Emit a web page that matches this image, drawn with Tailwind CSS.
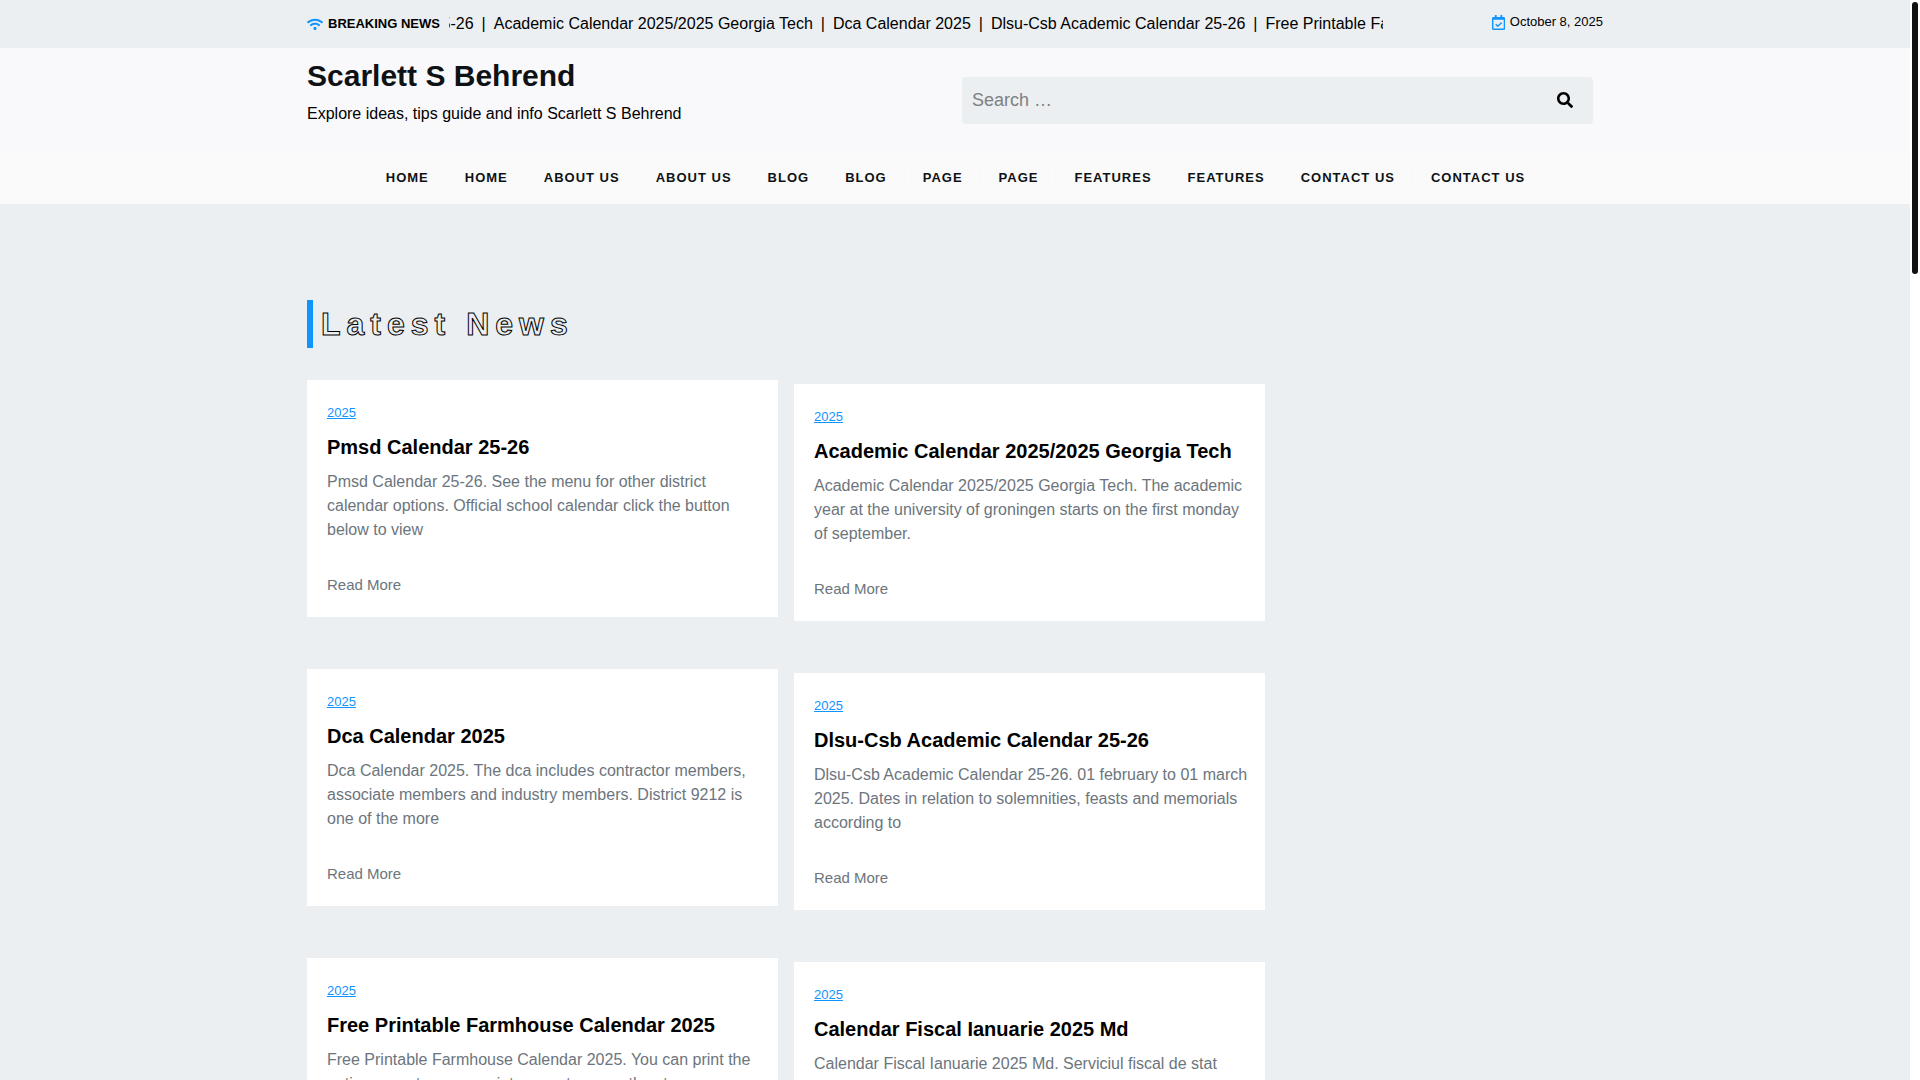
<!DOCTYPE html>
<html lang="en">
<head>
    <meta charset="UTF-8">
    <meta name="viewport" content="width=device-width, initial-scale=1.0">
    <title>Scarlett S Behrend</title>
    <script src="https://cdn.jsdelivr.net/npm/@tailwindcss/browser@4"></script>
</head>
<body class="h-screen overflow-hidden bg-white pr-[10px] font-['Liberation_Sans',Arial,sans-serif] text-base text-black">

  <div class="min-h-full bg-[#ebeff2]">

    <!-- Top bar -->
    <div class="mx-auto flex h-12 max-w-[1320px] items-center px-3">
      <div class="flex shrink-0 items-center gap-[5px] text-[13px] font-bold">
        <svg class="w-4" viewBox="0 0 640 512" fill="#1094ff"><path d="M634.900 154.900C457.700-9 182.200-8.900 5.100 154.900c-6.700 6.200-6.800 16.600-.4 23l34.200 34c6.100 6.100 16 6.200 22.400.4 145.900-133.700 371.300-133.700 517.300 0 6.400 5.900 16.300 5.700 22.400-.4l34.200-34c6.500-6.400 6.300-16.800-.3-23zM320 352c-35.300 0-64 28.700-64 64s28.700 64 64 64 64-28.700 64-64-28.700-64-64-64zm202.700-83.600c-115.300-101.900-290.200-101.800-405.300 0-6.900 6.100-7.100 16.700-.6 23.200l34.400 34c6 5.900 15.700 6.300 22.100.8 83.900-72.600 209.700-72.400 293.400 0 6.400 5.500 16.100 5.200 22.100-.8l34.400-34c6.600-6.500 6.400-17.200-.5-23.200z"/></svg>
        <span>BREAKING NEWS</span>
      </div>
      <div class="ml-[9px] w-[934px] overflow-hidden">
        <ul class="-ml-[131px] flex gap-2 whitespace-nowrap">
          <li><a href="#">Pmsd Calendar 25-26</a></li>
          <li>|</li>
          <li><a href="#">Academic Calendar 2025/2025 Georgia Tech</a></li>
          <li>|</li>
          <li><a href="#">Dca Calendar 2025</a></li>
          <li>|</li>
          <li><a href="#">Dlsu-Csb Academic Calendar 25-26</a></li>
          <li>|</li>
          <li><a href="#">Free Printable Farmhouse Calendar 2025</a></li>
        </ul>
      </div>
      <div class="mb-1 ml-auto flex shrink-0 items-center gap-[5px] text-[13px]">
        <svg class="h-[15px]" viewBox="0 0 448 512" fill="#1094ff"><path d="M400 64h-48V12c0-6.600-5.400-12-12-12h-40c-6.600 0-12 5.400-12 12v52H160V12c0-6.600-5.400-12-12-12h-40c-6.600 0-12 5.400-12 12v52H48C21.500 64 0 85.500 0 112v352c0 26.500 21.500 48 48 48h352c26.500 0 48-21.500 48-48V112c0-26.500-21.500-48-48-48zm-6 400H54c-3.300 0-6-2.700-6-6V160h352v298c0 3.300-2.700 6-6 6zm-52.800-200l-17-17c-4.700-4.700-12.300-4.700-17 0L198.800 353l-47.100-47.500c-4.700-4.700-12.300-4.700-17 0l-17 17c-4.700 4.700-4.700 12.300-.1 17l72.300 72.800c4.700 4.700 12.300 4.700 17 .1l134.300-131.400c4.700-4.700 4.700-12.300 0-17z"/></svg>
        <span>October 8, 2025</span>
      </div>
    </div>

    <!-- Header -->
    <header class="bg-[#f9f9fc]">
      <div class="mx-auto grid h-[104px] max-w-[1320px] grid-cols-2 px-3">
        <div class="pt-2">
          <h1 class="text-[30px] leading-10 font-bold text-[#0e1214]"><a href="#">Scarlett S Behrend</a></h1>
          <p class="mt-[6px]">Explore ideas, tips guide and info Scarlett S Behrend</p>
        </div>
        <form class="mt-[29px] mr-[10px] ml-[7px] flex h-[47px] items-center rounded bg-[#ebeff2]">
          <input type="search" aria-label="Search" placeholder="Search …" class="h-full min-w-0 flex-1 px-[10px] text-lg placeholder:text-[#808080]">
          <button type="submit" aria-label="Search" class="px-5 pb-[2px]">
            <svg class="w-4" viewBox="0 0 512 512"><path d="M505 442.700L405.300 343c-4.500-4.500-10.600-7-17-7H372c27.600-35.300 44-79.700 44-128C416 93.100 322.900 0 208 0S0 93.100 0 208s93.100 208 208 208c48.300 0 92.700-16.400 128-44v16.300c0 6.400 2.500 12.500 7 17l99.700 99.700c9.400 9.400 24.600 9.400 33.900 0l28.300-28.300c9.400-9.400 9.400-24.600.1-34zM208 336c-70.700 0-128-57.200-128-128 0-70.700 57.200-128 128-128 70.700 0 128 57.200 128 128 0 70.700-57.200 128-128 128z"/></svg>
          </button>
        </form>
      </div>
    </header>

    <!-- Navbar -->
    <nav class="flex h-[52px] items-center justify-center bg-[#fafafa] text-[13px] font-bold tracking-[1px] text-[#0e1214]">
      <a href="#" class="border-r border-[#f8f8f8] pr-[17px] pl-[18px]">HOME</a>
      <a href="#" class="border-r border-[#f8f8f8] pr-[17px] pl-[18px]">HOME</a>
      <a href="#" class="border-r border-[#f8f8f8] pr-[17px] pl-[18px]">ABOUT US</a>
      <a href="#" class="border-r border-[#f8f8f8] pr-[17px] pl-[18px]">ABOUT US</a>
      <a href="#" class="border-r border-[#f8f8f8] pr-[17px] pl-[18px]">BLOG</a>
      <a href="#" class="border-r border-[#f8f8f8] pr-[17px] pl-[18px]">BLOG</a>
      <a href="#" class="border-r border-[#f8f8f8] pr-[17px] pl-[18px]">PAGE</a>
      <a href="#" class="border-r border-[#f8f8f8] pr-[17px] pl-[18px]">PAGE</a>
      <a href="#" class="border-r border-[#f8f8f8] pr-[17px] pl-[18px]">FEATURES</a>
      <a href="#" class="border-r border-[#f8f8f8] pr-[17px] pl-[18px]">FEATURES</a>
      <a href="#" class="border-r border-[#f8f8f8] pr-[17px] pl-[18px]">CONTACT US</a>
      <a href="#" class="pr-[17px] pl-[18px]">CONTACT US</a>
    </nav>

    <!-- Latest news -->
    <main class="mx-auto max-w-[1320px] px-3 pt-24">
      <h2 class="border-l-6 border-[#1094ff] pl-2 text-[32px] leading-[48px] font-bold tracking-[6px] text-transparent [-webkit-text-stroke:1px_#000]">Latest News</h2>

      <div class="mt-8 grid max-w-[958px] grid-cols-2 gap-4">
        <div class="flex flex-col gap-[52px]">
          <article class="bg-white pt-[21px] pr-4 pb-5 pl-5">
            <a href="#" class="block text-[13px] leading-6 text-[#1094ff] underline">2025</a>
            <h3 class="mt-[7px] mb-2 text-xl leading-[30px] font-bold"><a href="#">Pmsd Calendar 25-26</a></h3>
            <p class="text-[#6c757d]">Pmsd Calendar 25-26. See the menu for other district calendar options. Official school calendar click the button below to view</p>
            <a href="#" class="mt-[31px] block text-[15px] leading-6 text-[#6c757d]">Read More</a>
          </article>
          <article class="bg-white pt-[21px] pr-4 pb-5 pl-5">
            <a href="#" class="block text-[13px] leading-6 text-[#1094ff] underline">2025</a>
            <h3 class="mt-[7px] mb-2 text-xl leading-[30px] font-bold"><a href="#">Dca Calendar 2025</a></h3>
            <p class="text-[#6c757d]">Dca Calendar 2025. The dca includes contractor members, associate members and industry members. District 9212 is one of the more</p>
            <a href="#" class="mt-[31px] block text-[15px] leading-6 text-[#6c757d]">Read More</a>
          </article>
          <article class="bg-white pt-[21px] pr-4 pb-5 pl-5">
            <a href="#" class="block text-[13px] leading-6 text-[#1094ff] underline">2025</a>
            <h3 class="mt-[7px] mb-2 text-xl leading-[30px] font-bold"><a href="#">Free Printable Farmhouse Calendar 2025</a></h3>
            <p class="text-[#6c757d]">Free Printable Farmhouse Calendar 2025. You can print the entire year at once or print pages to a months at</p>
            <a href="#" class="mt-[31px] block text-[15px] leading-6 text-[#6c757d]">Read More</a>
          </article>
        </div>
        <div class="mt-1 flex flex-col gap-[52px]">
          <article class="bg-white pt-[21px] pr-4 pb-5 pl-5">
            <a href="#" class="block text-[13px] leading-6 text-[#1094ff] underline">2025</a>
            <h3 class="mt-[7px] mb-2 text-xl leading-[30px] font-bold"><a href="#">Academic Calendar 2025/2025 Georgia Tech</a></h3>
            <p class="text-[#6c757d]">Academic Calendar 2025/2025 Georgia Tech. The academic year at the university of groningen starts on the first monday of september.</p>
            <a href="#" class="mt-[31px] block text-[15px] leading-6 text-[#6c757d]">Read More</a>
          </article>
          <article class="bg-white pt-[21px] pr-4 pb-5 pl-5">
            <a href="#" class="block text-[13px] leading-6 text-[#1094ff] underline">2025</a>
            <h3 class="mt-[7px] mb-2 text-xl leading-[30px] font-bold"><a href="#">Dlsu-Csb Academic Calendar 25-26</a></h3>
            <p class="text-[#6c757d]">Dlsu-Csb Academic Calendar 25-26. 01 february to 01 march 2025. Dates in relation to solemnities, feasts and memorials according to</p>
            <a href="#" class="mt-[31px] block text-[15px] leading-6 text-[#6c757d]">Read More</a>
          </article>
          <article class="bg-white pt-[21px] pr-4 pb-5 pl-5">
            <a href="#" class="block text-[13px] leading-6 text-[#1094ff] underline">2025</a>
            <h3 class="mt-[7px] mb-2 text-xl leading-[30px] font-bold"><a href="#">Calendar Fiscal Ianuarie 2025 Md</a></h3>
            <p class="text-[#6c757d]">Calendar Fiscal Ianuarie 2025 Md. Serviciul fiscal de stat</p>
            <a href="#" class="mt-[31px] block text-[15px] leading-6 text-[#6c757d]">Read More</a>
          </article>
        </div>
      </div>
    </main>
  </div>

  <!-- Scrollbar -->
  <div class="fixed inset-y-0 right-0 w-[10px] bg-white p-[2px]">
    <div class="h-[272px] rounded-full bg-[#111]"></div>
  </div>

</body>
</html>
